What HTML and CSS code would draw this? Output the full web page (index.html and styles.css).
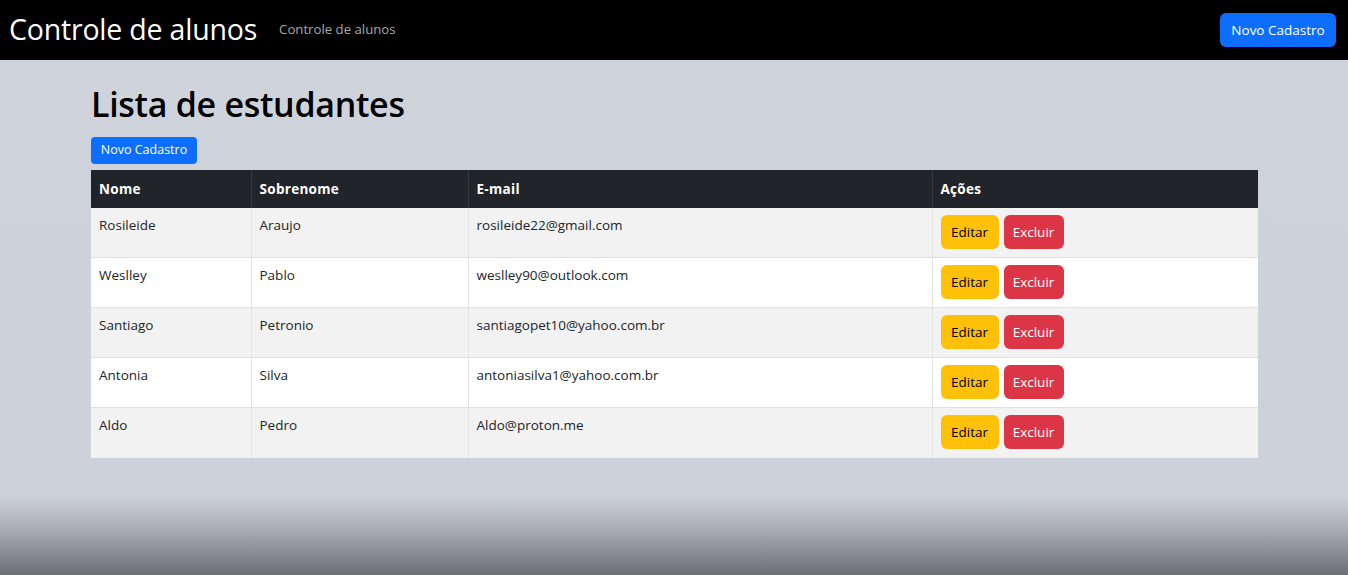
FILE: index.html
```html
<!DOCTYPE html>
<html lang="pt-BR">
<head>
<meta charset="utf-8">
<title>Controle de alunos</title>
<link rel="stylesheet" href="styles.css">
</head>
<body>
<nav class="navbar">
  <div class="nav-left">
    <a class="brand" href="#">Controle de alunos</a>
    <a class="nav-link" href="#">Controle de alunos</a>
  </div>
  <button class="btn btn-primary">Novo Cadastro</button>
</nav>
<main class="container">
  <h1 class="title">Lista de estudantes</h1>
  <button class="btn btn-primary btn-sm">Novo Cadastro</button>
  <table class="table">
    <thead>
      <tr><th class="c-nome">Nome</th><th class="c-sob">Sobrenome</th><th class="c-mail">E-mail</th><th>Ações</th></tr>
    </thead>
    <tbody>
      <tr><td>Rosileide</td><td>Araujo</td><td>rosileide22@gmail.com</td><td><div class="actions"><button class="btn btn-warning">Editar</button><button class="btn btn-danger">Excluir</button></div></td></tr>
      <tr><td>Weslley</td><td>Pablo</td><td>weslley90@outlook.com</td><td><div class="actions"><button class="btn btn-warning">Editar</button><button class="btn btn-danger">Excluir</button></div></td></tr>
      <tr><td>Santiago</td><td>Petronio</td><td>santiagopet10@yahoo.com.br</td><td><div class="actions"><button class="btn btn-warning">Editar</button><button class="btn btn-danger">Excluir</button></div></td></tr>
      <tr><td>Antonia</td><td>Silva</td><td>antoniasilva1@yahoo.com.br</td><td><div class="actions"><button class="btn btn-warning">Editar</button><button class="btn btn-danger">Excluir</button></div></td></tr>
      <tr><td>Aldo</td><td>Pedro</td><td>Aldo@proton.me</td><td><div class="actions"><button class="btn btn-warning">Editar</button><button class="btn btn-danger">Excluir</button></div></td></tr>
    </tbody>
  </table>
</main>
</body>
</html>
```
FILE: styles.css
```css
html { height: 100%; }
body {
  margin: 0;
  min-height: 100%;
  font-family: "Open Sans", "Noto Sans", "Liberation Sans", sans-serif;
  color: #212529;
  background: linear-gradient(to bottom, #cfd3db 0, #cdd1d9 495px, #a9acb1 530px, #6c6e73 575px);
  background-repeat: no-repeat;
  background-attachment: fixed;
}
.navbar {
  height: 60px;
  background: #000;
  display: flex;
  align-items: center;
  justify-content: space-between;
  padding: 0 12px 0 9px;
  box-sizing: border-box;
}
.nav-left { display: flex; align-items: center; gap: 22px; }
.brand {
  color: #fff;
  font-size: 28.5px;
  text-decoration: none;
  letter-spacing: -0.2px;
  line-height: 1;
  padding-bottom: 2px;
}
.nav-link {
  color: #a8a8a8;
  font-size: 13.2px;
  text-decoration: none;
  margin-bottom: 2px;
}
.btn {
  font-family: inherit;
  border: 0;
  border-radius: 6px;
  font-size: 13.5px;
  cursor: pointer;
  line-height: 1.5;
  white-space: nowrap;
}
.btn-primary { background: #0d6efd; color: #fff; padding: 0; height: 34px; width: 116px; }
.btn-sm { font-size: 12.5px; height: 27px; width: 106px; border-radius: 4px; }
.btn-warning { background: #ffc107; color: #000; height: 34px; width: 58px; padding: 0; }
.btn-danger { background: #dc3545; color: #fff; height: 34px; width: 60px; padding: 0; }
.container {
  width: 1167px;
  margin: 0 0 0 91px;
  padding-top: 22px;
}
.title {
  margin: 0 0 11px;
  font-size: 34px;
  font-weight: 600;
  line-height: 44px;
  color: #000;
  letter-spacing: -0.3px;
}
.container > .btn-sm { display: block; }
.table {
  margin-top: 6px;
  width: 1167px;
  border-collapse: collapse;
  font-size: 13.5px;
}
.table th {
  background: #212529;
  color: #fff;
  text-align: left;
  font-weight: 700;
  font-size: 13.5px;
  letter-spacing: 0.3px;
  height: 38px;
  padding: 0 8px;
  box-sizing: border-box;
  border-right: 1px solid #32383e;
}
.table th:last-child { border-right: 0; }
.c-nome { width: 160px; }
.c-sob { width: 217px; }
.c-mail { width: 464px; }
.table td {
  vertical-align: top;
  padding: 8px 8px;
  height: 50px;
  box-sizing: border-box;
  border-right: 1px solid #e2e3e5;
  border-top: 1px solid #dee2e6;
  color: #212529;
}
.table td:last-child { border-right: 0; padding-top: 7px; }
.table tbody tr:nth-child(odd) td { background: #f2f2f2; }
.table tbody tr:nth-child(even) td { background: #fff; }
.table tbody tr:first-child td { border-top: 0; height: 49px; }
.actions { display: flex; gap: 5px; }
```
